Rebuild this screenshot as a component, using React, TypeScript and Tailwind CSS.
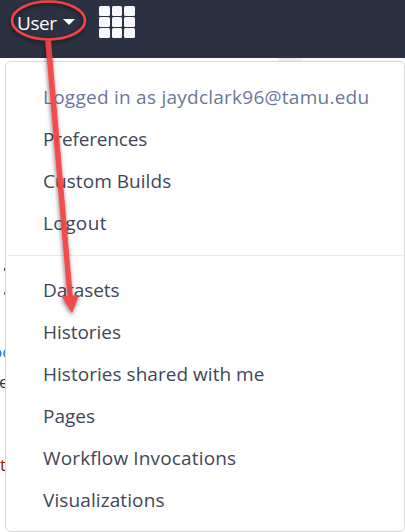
const account = [
  { label: "Preferences", spacing: "tracking-[-0.15px]" },
  { label: "Custom Builds", spacing: "tracking-[0.05px]" },
  { label: "Logout", spacing: "tracking-[0.4px]" },
];

const data = [
  { label: "Datasets", spacing: "tracking-[-0.1px]" },
  { label: "Histories", spacing: "tracking-[-0.05px]" },
  { label: "Histories shared with me", spacing: "tracking-[0.03px]" },
  { label: "Pages", spacing: "tracking-[0px]" },
  { label: "Workflow Invocations", spacing: "tracking-[0.15px]" },
  { label: "Visualizations", spacing: "tracking-[0.1px]" },
];

function Item({ label, spacing }: { label: string; spacing: string }) {
  return (
    <a className={`flex h-[42px] items-center whitespace-nowrap pl-9 ${spacing}`}>
      <span>{label}</span>
    </a>
  );
}

function Header() {
  return (
    <header className="flex h-[58px] items-start bg-[#2c3143] text-white">
      <div className="flex h-[46px] w-[75px] items-center justify-between pl-[17px] text-[19px] tracking-[-0.4px]">
        <span>User</span>
        <span className="mt-[-3px] border-x-[6px] border-t-[6px] border-x-transparent border-t-white" />
      </div>
      <div className="ml-6 mt-[6px] grid grid-cols-3 gap-x-[2px] gap-y-[1px]">
        {Array.from({ length: 9 }, (_, i) => (
          <span key={i} className="h-[10px] w-[10.5px] rounded-[1.5px] bg-[#f8f9fc]" />
        ))}
      </div>
    </header>
  );
}

function PageBehind() {
  return (
    <main className="flex h-[474px] justify-between">
      <div className="flex w-[7px] flex-col overflow-hidden pt-[210px] text-[17px] leading-6">
        <span className="ml-[4px] h-[3px] w-[3px] shrink-0 bg-[#444]" />
        <span className="ml-[4px] mt-[21px] h-[3px] w-[3px] shrink-0 bg-[#777]" />
        <span className="-ml-[8px] mt-[45px] text-[#1976b8]">oc</span>
        <span className="-ml-[1px] mt-[6px] text-[#2c3143]">e</span>
        <span className="mt-[59px] text-[#8b2020]">t</span>
      </div>
      <div className="flex h-3 w-[127px] bg-[#f8f9fb]">
        <span className="w-[25px] bg-[#eeeeee]" />
      </div>
    </main>
  );
}

function Annotation() {
  return (
    <svg className="pointer-events-none absolute inset-0 h-[532px] w-[405px]" viewBox="0 0 405 532">
      <defs>
        <filter id="shadow" x="-30%" y="-10%" width="160%" height="120%">
          <feDropShadow dx="-0.5" dy="2" stdDeviation="2" floodColor="#000" floodOpacity="0.55" />
        </filter>
      </defs>
      <g filter="url(#shadow)">
        <ellipse cx="48.5" cy="20.5" rx="36.5" ry="19" fill="none" stroke="#f54343" strokeWidth="2.6" />
        <path d="M45.2 40.5H51L72.7 295.5L79.2 295L72 313.3L61.5 296.5L67.3 296Z" fill="#f54343" fillOpacity="0.91" />
      </g>
    </svg>
  );
}

export default function App() {
  return (
    <div className="relative h-[532px] w-[405px] overflow-hidden bg-white font-['Open_Sans','Noto_Sans',sans-serif]">
      <Header />
      <PageBehind />
      <nav className="absolute right-0 top-[61px] h-[471px] w-[400px] rounded-[6px] border border-[#d9d9d9] bg-white pl-px pt-[14px] text-[19px] text-[#414658]">
        <div className="text-[#6b769b]">
          <Item label="Logged in as jaydclark96@tamu.edu" spacing="tracking-[0.25px]" />
        </div>
        {account.map((item) => (
          <Item key={item.label} {...item} />
        ))}
        <hr className="mb-[13px] mt-[11px] border-[#e9e9e9]" />
        {data.map((item) => (
          <Item key={item.label} {...item} />
        ))}
      </nav>
      <Annotation />
    </div>
  );
}
